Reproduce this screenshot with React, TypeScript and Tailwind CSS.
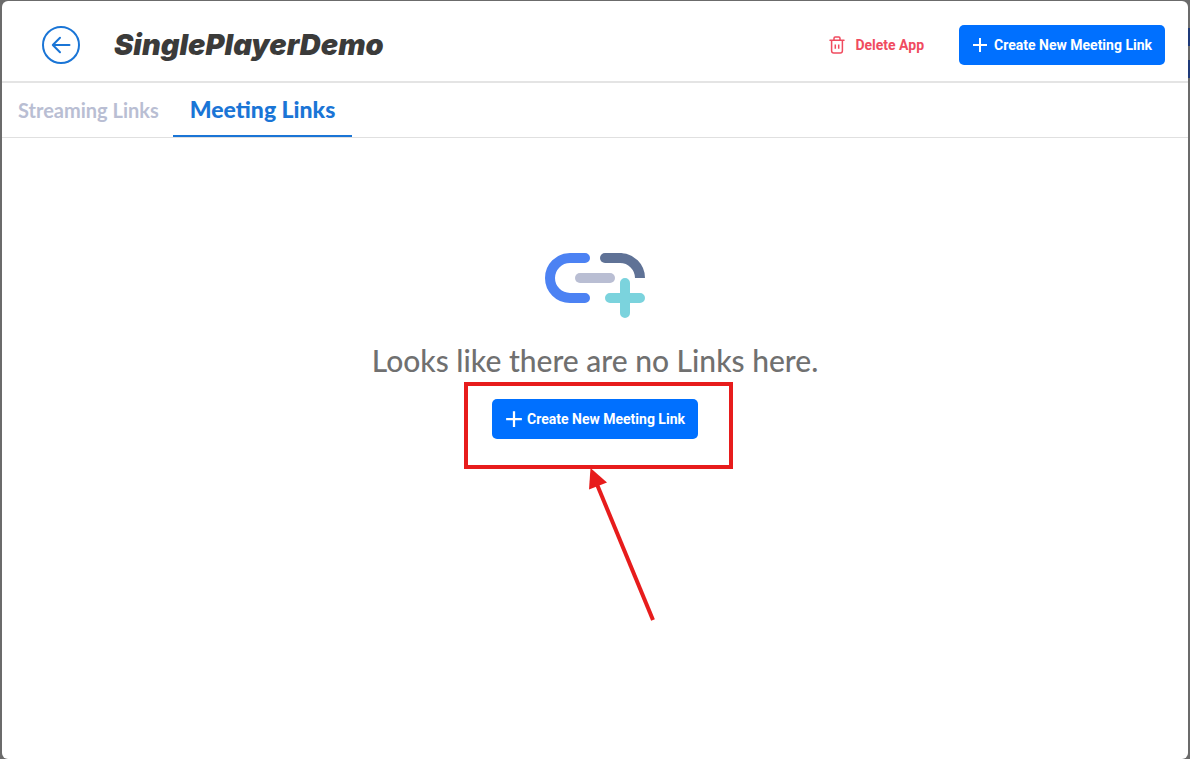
import type { ReactNode } from "react";

const TABS = [
  { id: "streaming", label: "Streaming Links" },
  { id: "meeting", label: "Meeting Links" },
];

const BackIcon = () => (
  <svg width="38" height="38" viewBox="0 0 38 38" fill="none" stroke="currentColor" strokeWidth="2">
    <circle cx="19" cy="19" r="18" />
    <path d="M27.500 19H11M18 11.800L10.800 19l7.200 7.200" strokeLinecap="round" strokeLinejoin="round" />
  </svg>
);

const TrashIcon = () => (
  <svg width="16" height="18" viewBox="0 0 16 18" fill="none" stroke="currentColor" strokeWidth="1.5">
    <path d="M1 4.2h14M5 4V2.2Q5 1 6.2 1h3.6Q11 1 11 2.2V4" strokeLinecap="round" />
    <path d="M2.6 4.5v10.2Q2.6 17 4.8 17h6.4q2.2 0 2.2-2.3V4.5M6.3 8.5v4.2M9.7 8.5v4.2" />
  </svg>
);

const PlusIcon = ({ size }: { size: number }) => (
  <svg width={size} height={size} viewBox="0 0 16 16" stroke="currentColor" strokeWidth="2">
    <path d="M8 1v14M1 8h14" />
  </svg>
);

const AddLinkIcon = () => (
  <svg width="100" height="65" viewBox="0 0 100 65" fill="none" strokeWidth="10">
    <path d="M40 5H25a20 20 0 0 0 0 40h15" stroke="#4c82f3" strokeLinecap="round" />
    <path d="M60 5h15" stroke="#5f7296" strokeLinecap="round" />
    <path d="M75 5a20 20 0 0 1 20 20" stroke="#5f7296" />
    <path d="M35 25h30" stroke="#b9bed3" strokeLinecap="round" />
    <path d="M65 45h30M80 30v30" stroke="#7bd3dd" strokeLinecap="round" />
  </svg>
);

const CreateButton = ({ className, children }: { className: string; children: ReactNode }) => (
  <button
    type="button"
    className={`flex h-10 items-center rounded-[5px] bg-[#0070ff] font-['Roboto',sans-serif] text-[14px] font-bold whitespace-nowrap text-white ${className}`}
  >
    {children}
    Create New Meeting Link
  </button>
);

// Red frame and arrow that point the reader to the button
const Callout = ({ children }: { children: ReactNode }) => (
  <div className="relative">
    {children}
    <div className="pointer-events-none absolute -top-[17px] -right-[35px] -bottom-[30px] -left-[28px] border-4 border-[#e71c1c]" />
    <svg
      className="pointer-events-none absolute top-[68px] left-[94px]"
      width="72"
      height="156"
      viewBox="0 0 72 156"
    >
      <path d="M10 15L67 153" stroke="#e71c1c" strokeWidth="4" />
      <path d="M4.500 1L21 15.500L3 22.500z" fill="#e71c1c" />
    </svg>
  </div>
);

// Sliver of the dimmed page that shows beside the dialog
const Backdrop = () => (
  <div className="pointer-events-none absolute top-7 right-0 flex flex-col gap-[14px]">
    <div className="h-[18px] w-[2px] bg-[#1f3a78]" />
    <div className="h-[18px] w-[2px] bg-[#1f3a78]" />
  </div>
);

const Header = () => (
  <header className="flex items-center justify-between border-b-2 border-[#e4e4e4] pt-6 pr-[23px] pb-4 pl-10">
    <div className="flex items-center gap-[34px]">
      <button type="button" aria-label="Back" className="text-[#1a75d6]">
        <BackIcon />
      </button>
      <h1 className="font-['Inter',sans-serif] text-[29px] leading-10 font-black text-[#3b3b3a] italic">
        SinglePlayerDemo
      </h1>
    </div>
    <div className="flex items-center gap-[35px]">
      <button
        type="button"
        className="flex items-center gap-[10px] font-['Roboto',sans-serif] text-[14px] font-bold text-[#f04b5f]"
      >
        <TrashIcon />
        Delete App
      </button>
      <CreateButton className="gap-[6px] px-[13px]">
        <PlusIcon size={16} />
      </CreateButton>
    </div>
  </header>
);

const Tabs = ({ active }: { active: string }) => (
  <nav role="tablist" className="flex h-[55px] border-b border-[#e0e0e0]">
    {TABS.map(({ id, label }) => (
      <button
        key={id}
        type="button"
        role="tab"
        aria-selected={id === active}
        className={
          id === active
            ? "border-b-2 border-[#1a75d6] px-[17px] text-[23px] font-black text-[#1a75d6]"
            : "pr-[14px] pl-4 text-[20px] font-bold text-[#b9bed3]"
        }
      >
        {label}
      </button>
    ))}
  </nav>
);

const App = () => {
  return (
    <div className="relative flex min-h-screen flex-col bg-[#6b6b6b] px-[2px] pt-px font-['Lato','Open_Sans',sans-serif]">
      <Backdrop />
      <div className="flex grow flex-col rounded-md bg-white">
        <Header />
        <Tabs active="meeting" />
        <main className="flex flex-col items-center pt-[115px]">
          <AddLinkIcon />
          <p className="mt-[22px] mb-[19px] text-[30px] leading-10 font-medium text-[#707070]">
            Looks like there are no Links here.
          </p>
          <Callout>
            <CreateButton className="gap-1 px-[13px]">
              <PlusIcon size={18} />
            </CreateButton>
          </Callout>
        </main>
      </div>
    </div>
  );
};

export default App;
